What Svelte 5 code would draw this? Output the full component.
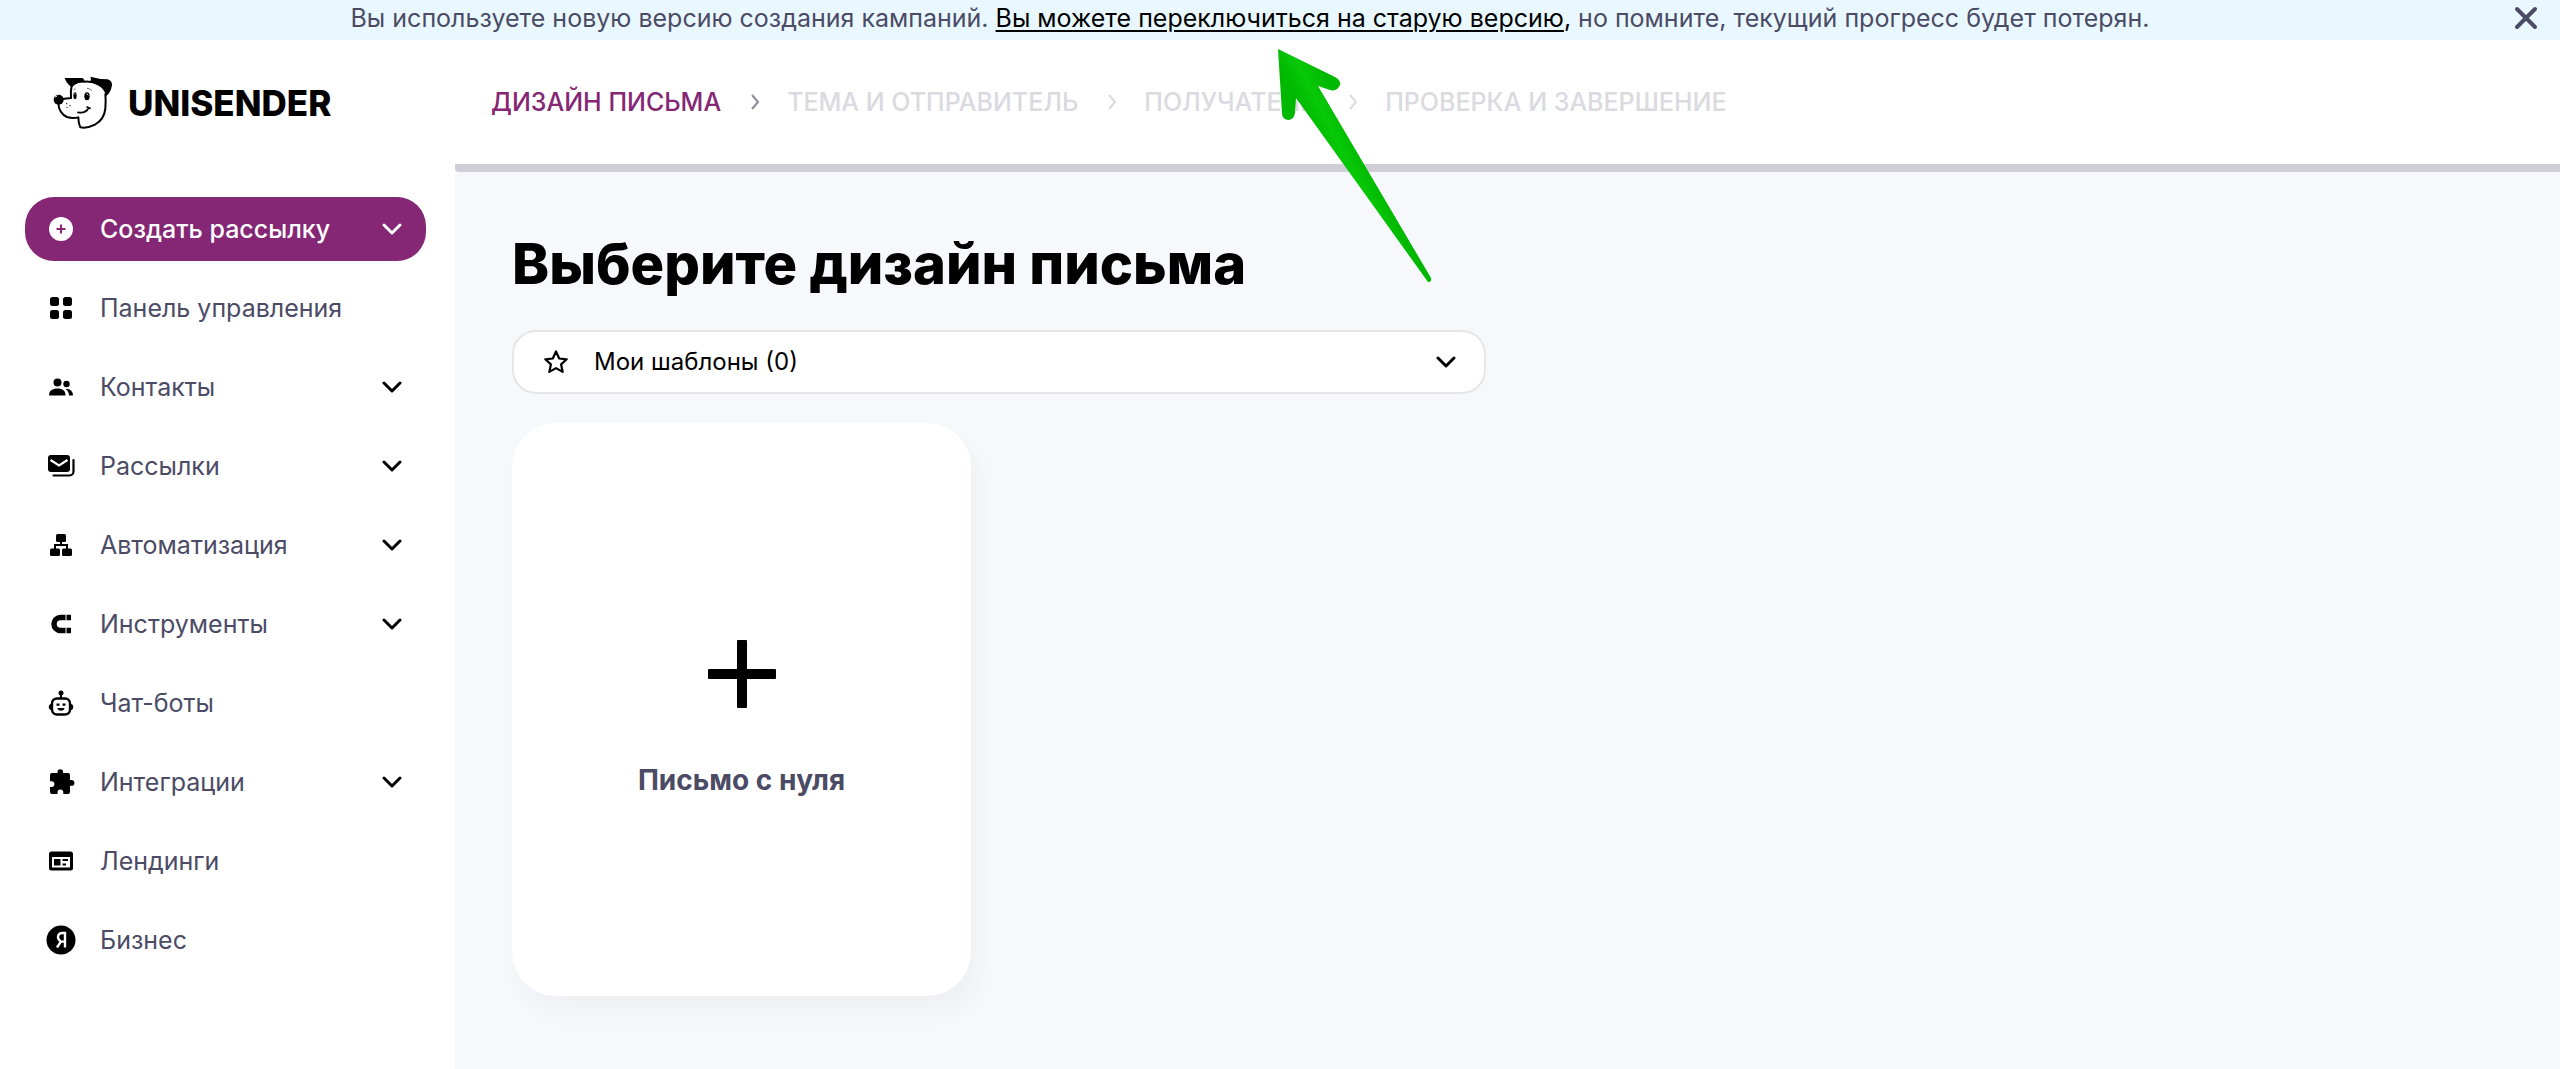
<script lang="ts">
	type MenuItem = { icon: string; label: string; expandable?: boolean };

	const menu: MenuItem[] = [
		{ icon: 'dashboard', label: 'Панель управления' },
		{ icon: 'contacts', label: 'Контакты', expandable: true },
		{ icon: 'mail', label: 'Рассылки', expandable: true },
		{ icon: 'automation', label: 'Автоматизация', expandable: true },
		{ icon: 'tools', label: 'Инструменты', expandable: true },
		{ icon: 'bot', label: 'Чат-боты' },
		{ icon: 'puzzle', label: 'Интеграции', expandable: true },
		{ icon: 'landing', label: 'Лендинги' },
		{ icon: 'business', label: 'Бизнес' }
	];

	const steps = ['Дизайн письма', 'Тема и отправитель', 'Получатели', 'Проверка и завершение'];

	let currentStep = $state(0);
	let showNotice = $state(true);
	let opened = $state('');
	let source = $state('my');

	function toggle(label: string) {
		opened = opened === label ? '' : label;
	}
</script>

{#snippet chevron()}
	<svg class="chevron" viewBox="0 0 20 12" aria-hidden="true">
		<path d="M2 2l8 8 8-8" fill="none" stroke="currentColor" stroke-width="3" stroke-linecap="round" stroke-linejoin="round" />
	</svg>
{/snippet}

{#snippet icon(name: string)}
	<svg class="icon" viewBox="0 0 30 30" fill="currentColor" aria-hidden="true">
		{#if name === 'dashboard'}
			<rect x="4" y="4" width="9" height="9" rx="2.5" />
			<rect x="17" y="4" width="9" height="9" rx="2.5" />
			<rect x="4" y="17" width="9" height="9" rx="2.5" />
			<rect x="17" y="17" width="9" height="9" rx="2.5" />
		{:else if name === 'contacts'}
			<circle cx="11.5" cy="10.5" r="4" />
			<circle cx="20.5" cy="12" r="3.2" />
			<path d="M3 23.5c0-5 3.500-7 8.500-7s8 2 8 7z" />
			<path d="M19.5 17c4.500-.5 7.500 2 7.500 6.500h-4c0-3-1.200-5-3.500-6.500z" />
		{:else if name === 'mail'}
			<path d="M5 4h16a3 3 0 0 1 3 3v11a3 3 0 0 1-3 3H5a3 3 0 0 1-3-3V7a3 3 0 0 1 3-3z" />
			<path d="M4.5 9l8.500 5.500L21.5 9" fill="none" stroke="#fff" stroke-width="2.2" />
			<path d="M27.5 9v11.500a4 4 0 0 1-4 4H7.5" fill="none" stroke="currentColor" stroke-width="2.2" stroke-linecap="round" />
		{:else if name === 'automation'}
			<rect x="10" y="4" width="10" height="8" rx="1.5" />
			<rect x="4" y="18.5" width="10" height="7.5" rx="1.5" />
			<rect x="16" y="18.5" width="10" height="7.5" rx="1.5" />
			<path d="M15 11v4M9 19v-4h12v4" fill="none" stroke="currentColor" stroke-width="2" />
		{:else if name === 'tools'}
			<path d="M19.5 8.500h-5a6.500 6.500 0 0 0 0 13h5" fill="none" stroke="currentColor" stroke-width="5.5" />
			<path d="M20.5 5.700H25v5.500h-4.500zM20.5 18.800H25v5.500h-4.500z" />
		{:else if name === 'bot'}
			<rect x="6" y="10.5" width="18" height="16" rx="5" fill="none" stroke="currentColor" stroke-width="2.4" />
			<circle cx="15" cy="5" r="2.5" />
			<path d="M14 6h2v5h-2zM5 16v6c-3 0-3-6 0-6zM25 16v6c3 0 3-6 0-6zM10.5 15.500h3v2.200h-3zM16.5 15.500h3v2.200h-3zM11.5 20h7c0 3.500-7 3.500-7 0z" />
		{:else if name === 'puzzle'}
			<path d="M6 6h5.500V5a2.800 2.800 0 0 1 5.600 0v1H22a2 2 0 0 1 2 2v5h1.500a2.900 2.900 0 0 1 0 5.800H24V25a2 2 0 0 1-2 2h-4.700v-1.500a2.900 2.900 0 0 0-5.800 0V27H6a2 2 0 0 1-2-2v-5h1.500a2.900 2.900 0 0 0 0-5.800H4V8a2 2 0 0 1 2-2z" />
		{:else if name === 'landing'}
			<rect x="3" y="5.5" width="24" height="19" rx="2.5" />
			<path d="M6 11h18v10.500H6z" fill="#fff" />
			<path d="M8 13h6.500v6.500H8zM16.5 13H22v2h-5.500zM16.5 17.500H20v2h-3.500z" />
		{:else if name === 'business'}
			<circle cx="15" cy="15" r="14.5" />
			<path d="M19 22.500V8h-2.500c-3 0-4.500 1.600-4.500 4 0 2.200 1 3.300 2.900 4.600L11 22.500M15 16.600h4" fill="none" stroke="#fff" stroke-width="2.4" />
		{:else}
			<circle cx="15" cy="15" r="12" />
			<path d="M15 10.500v9M10.500 15h9" stroke="#852774" stroke-width="2" />
		{/if}
	</svg>
{/snippet}

<div class="page">
	{#if showNotice}
		<div class="notice">
			<p>
				Вы используете новую версию создания кампаний.
				<a href="#old">Вы можете переключиться на старую версию</a><b>,</b>
				но помните, текущий прогресс будет потерян.
			</p>
			<button class="close" aria-label="Закрыть" onclick={() => (showNotice = false)}>
				<svg viewBox="0 0 24 24" aria-hidden="true">
					<path d="M3 3l18 18M21 3L3 21" stroke="currentColor" stroke-width="4" stroke-linecap="round" />
				</svg>
			</button>
		</div>
	{/if}

	<div class="layout">
		<aside>
			<a class="logo" href="#home">
				<svg viewBox="70 80 180 162" aria-hidden="true">
					<path
						d="M127 104Q122 124 124 146L98 149M86 163Q88 192 112 203Q130 209 146 204Q146 222 152 234Q172 238 196 226Q224 210 227 178Q229 155 227 132M125 108Q140 95 163 97Q185 95 205 104"
						fill="none"
						stroke="#000"
						stroke-width="6"
						stroke-linejoin="round"
					/>
					<path d="M105 86L159 86Q166 90 164 98Q142 98 126 114Q110 102 105 86z" />
					<path d="M182 82Q210 90 234 90Q248 95 247 108Q243 130 230 140Q224 120 208 110Q195 101 178 99Q187 92 182 82z" />
					<ellipse cx="87" cy="151" rx="15" ry="15" />
					<path d="M77 143l5-3" stroke="#fff" stroke-width="3" stroke-linecap="round" />
					<ellipse cx="136" cy="139" rx="5" ry="10" />
					<ellipse cx="172" cy="141" rx="8" ry="12" />
					<path d="M135 132l3 3M171 133l5 4" stroke="#fff" stroke-width="3" />
					<path d="M131 122q3-4 7-3M172 117q8 0 15 7" fill="none" stroke="#777" stroke-width="3" />
					<path d="M145 189Q168 193 177 176M172 173l9 4" fill="none" stroke="#000" stroke-width="5" stroke-linecap="round" />
					<circle cx="111" cy="163" r="2" />
					<circle cx="121" cy="169" r="2" />
					<circle cx="112" cy="174" r="2" />
				</svg>
				<span>UNISENDER</span>
			</a>

			<nav>
				<button class="item create" aria-expanded="false">
					{@render icon('create')}
					<span>Создать рассылку</span>
					{@render chevron()}
				</button>
				{#each menu as { icon: name, label, expandable }}
					{#if expandable}
						<button class="item" aria-expanded={opened === label} onclick={() => toggle(label)}>
							{@render icon(name)}
							<span>{label}</span>
							{@render chevron()}
						</button>
					{:else}
						<a class="item" href="#{name}">
							{@render icon(name)}
							<span>{label}</span>
						</a>
					{/if}
				{/each}
			</nav>
		</aside>

		<main>
			<ol class="steps">
				{#each steps as step, i}
					<li class:active={i === currentStep}>
						<button onclick={() => (currentStep = i)}>{step}</button>
						{#if i < steps.length - 1}
							<svg viewBox="0 0 14 20" aria-hidden="true">
								<path d="M5 3l6 7-6 7" fill="none" stroke="currentColor" stroke-width="2" />
							</svg>
						{/if}
					</li>
				{/each}
			</ol>

			<section>
				<h1>Выберите дизайн письма</h1>

				<label class="picker">
					<svg class="star" viewBox="0 0 28 28" aria-hidden="true">
						<path
							d="M14 3.500l3.200 7 7.500.8-5.600 5.100 1.600 7.500L14 20.100l-6.700 3.800 1.600-7.500-5.600-5.100 7.500-.8z"
							fill="none"
							stroke="currentColor"
							stroke-width="2.2"
							stroke-linejoin="round"
						/>
					</svg>
					<select bind:value={source} aria-label="Шаблоны">
						<option value="my">Мои шаблоны (0)</option>
					</select>
					{@render chevron()}
				</label>

				<button class="card">
					<svg viewBox="0 0 68 68" aria-hidden="true">
						<rect x="29" y="0" width="10" height="68" rx="1" />
						<rect x="0" y="29" width="68" height="10" rx="1" />
					</svg>
					<span>Письмо с нуля</span>
				</button>
			</section>
		</main>
	</div>

	<svg class="pointer" viewBox="0 0 160 240" aria-hidden="true">
		<defs>
			<linearGradient id="green" gradientUnits="userSpaceOnUse" x1="18" y1="48" x2="50" y2="32">
				<stop offset="0" stop-color="#00b800" />
				<stop offset="0.5" stop-color="#08c808" />
				<stop offset="1" stop-color="#00b800" />
			</linearGradient>
		</defs>
		<path
			d="M2 2L59 30Q65 33 64 38Q61 45 54 43L42 39L155 231Q156 235 152 235L20 51L19 66Q18 73 12 73Q6 72 6 66z"
			fill="url(#green)"
		/>
	</svg>
</div>

<style>
	:global(body) {
		margin: 0;
		background: #fff;
	}

	.page {
		position: relative;
		display: flex;
		flex-direction: column;
		min-height: 100vh;
		font-family: Inter, 'Liberation Sans', sans-serif;
		font-size: 25px;
		line-height: 32px;
		color: #4b4b66;
	}

	button,
	select {
		font: inherit;
		color: inherit;
		background: none;
		border: 0;
		padding: 0;
		cursor: pointer;
	}

	a {
		color: inherit;
		text-decoration: none;
	}

	.notice {
		display: flex;
		align-items: center;
		gap: 14px;
		height: 40px;
		padding-right: 22px;
		background: #e9f8fe;
	}

	.notice p {
		flex: 1;
		margin: 0 0 4px;
		text-align: center;
	}

	.notice a {
		color: #000;
		text-decoration: underline;
		text-decoration-thickness: 2px;
		text-underline-offset: 3px;
	}

	.notice b {
		color: #000;
		font-weight: 400;
	}

	.close {
		width: 24px;
		height: 24px;
		margin-bottom: 4px;
	}

	.close svg {
		display: block;
	}

	.layout {
		display: flex;
		flex: 1;
	}

	aside {
		flex: none;
		width: 455px;
		background: #fff;
	}

	.logo {
		display: flex;
		align-items: center;
		gap: 15px;
		height: 54px;
		padding: 36px 53px 0;
		font-size: 35px;
		font-weight: 800;
		color: #000;
	}

	.logo svg {
		width: 60px;
		height: 54px;
	}

	nav {
		display: flex;
		flex-direction: column;
		gap: 15px;
		padding: 67px 29px 0 25px;
	}

	.item {
		display: flex;
		align-items: center;
		gap: 24px;
		height: 64px;
		padding: 0 24px 0 21px;
		border-radius: 29px;
		text-align: left;
	}

	.item span {
		flex: 1;
	}

	.item .icon,
	.item .chevron {
		color: #000;
	}

	.icon {
		flex: none;
		width: 30px;
		height: 30px;
	}

	.chevron {
		flex: none;
		width: 20px;
		height: 12px;
	}

	.create {
		background: #852774;
		color: #fff;
		font-weight: 500;
	}

	.create .icon,
	.create .chevron {
		color: #fff;
	}

	main {
		flex: 1;
		background: #f7f8fc;
	}

	.steps {
		display: flex;
		gap: 26px;
		height: 124px;
		margin: 0;
		padding: 0 36px;
		border-bottom: 8px solid #cfced6;
		border-bottom-left-radius: 4px;
		background: #fff;
		list-style: none;
	}

	.steps li {
		display: flex;
		align-items: center;
		gap: 26px;
		color: #dadae0;
	}

	.steps button {
		font-weight: 500;
		text-transform: uppercase;
	}

	.steps svg {
		width: 14px;
		height: 20px;
	}

	.steps .active {
		color: #8b8b9a;
	}

	.steps .active button {
		color: #852774;
	}

	section {
		display: flex;
		flex-direction: column;
		align-items: flex-start;
		padding: 56px 57px;
	}

	h1 {
		margin: 0;
		font-size: 56px;
		line-height: 72px;
		font-weight: 800;
		color: #000;
	}

	.picker {
		position: relative;
		display: flex;
		align-items: center;
		box-sizing: border-box;
		width: 974px;
		max-width: 100%;
		height: 64px;
		margin-top: 30px;
		border: 2px solid #e6e6e8;
		border-radius: 24px;
		background: #fff;
		font-size: 24px;
		color: #000;
	}

	.picker select {
		flex: 1;
		height: 100%;
		padding: 0 80px;
		appearance: none;
	}

	/* icons lie over the native select */
	.picker .star,
	.picker .chevron {
		position: absolute;
		pointer-events: none;
	}

	.picker .star {
		left: 28px;
		width: 28px;
		height: 28px;
	}

	.picker .chevron {
		right: 28px;
	}

	.card {
		display: flex;
		flex-direction: column;
		align-items: center;
		justify-content: center;
		gap: 56px;
		box-sizing: border-box;
		width: 459px;
		height: 573px;
		margin-top: 29px;
		padding-top: 16px;
		border-radius: 44px;
		background: #fff;
		box-shadow: 8px 16px 24px rgba(40, 40, 40, 0.04);
		font-size: 28px;
		font-weight: 700;
	}

	.card svg {
		width: 68px;
		height: 68px;
		fill: #000;
	}

	.pointer {
		position: absolute;
		top: 47px;
		left: 1276px;
		width: 160px;
		height: 240px;
		pointer-events: none;
	}
</style>
